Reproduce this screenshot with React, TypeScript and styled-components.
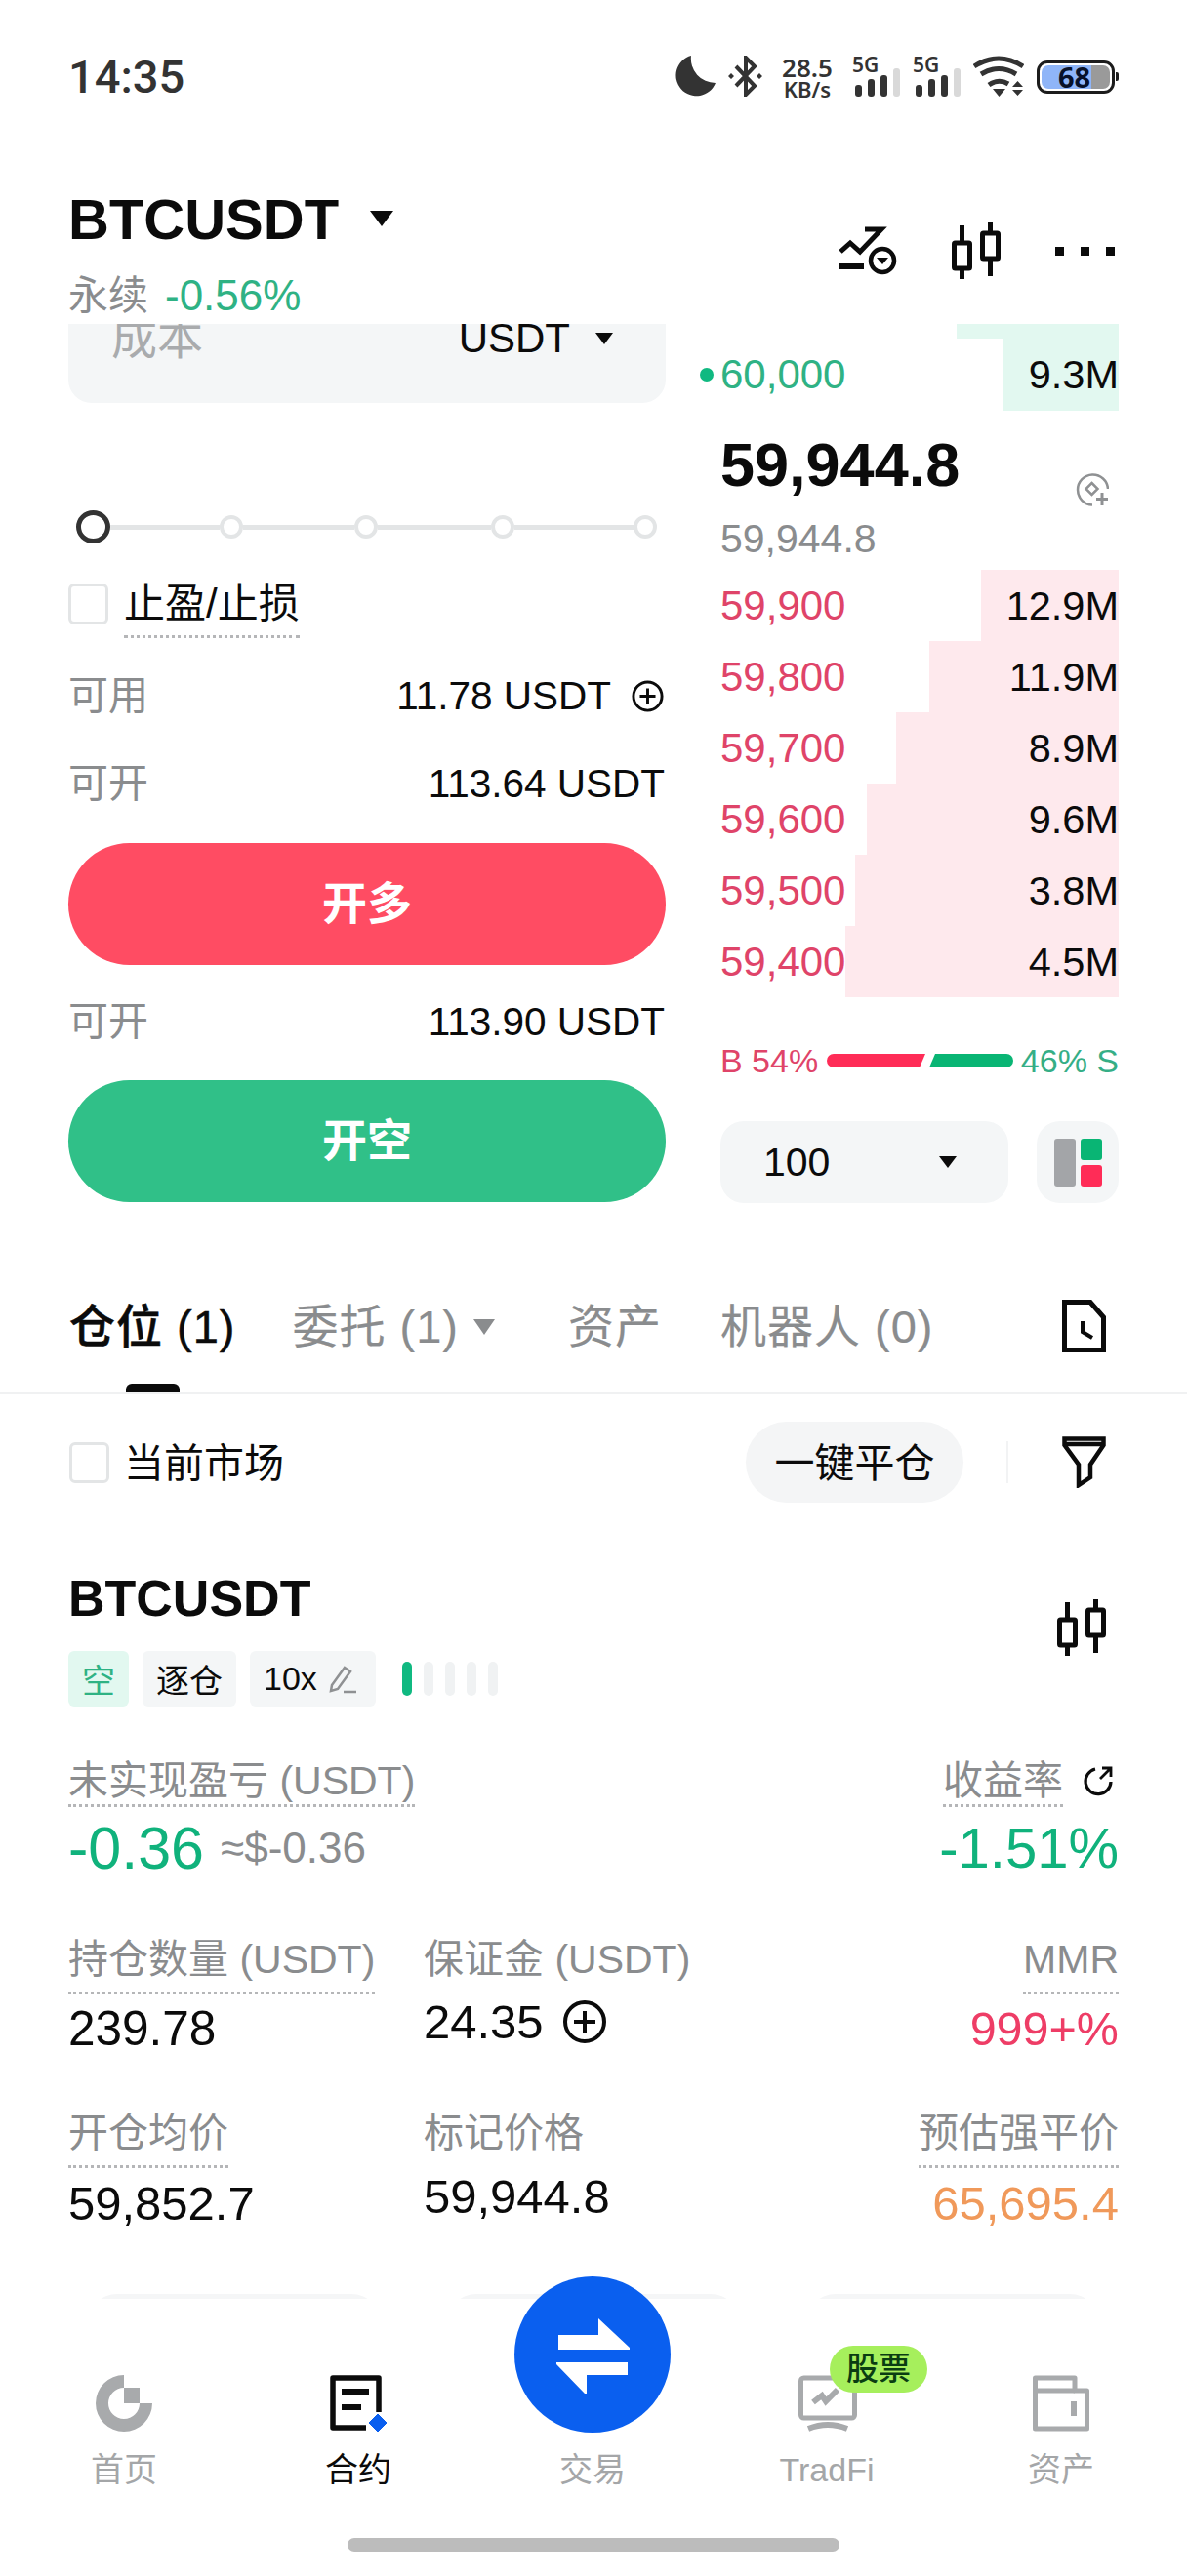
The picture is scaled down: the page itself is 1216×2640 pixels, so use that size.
import React from "react";
import styled, { createGlobalStyle } from "styled-components";

const FONT = `"Liberation Sans", "Noto Sans CJK SC", sans-serif`;
const GREEN = "#2fb284";
const RED = "#df4469";
const GRAY = "#8a8c8e";

const Global = createGlobalStyle`
  html, body { margin: 0; padding: 0; background: #fff; }
  body { font-family: ${FONT}; color: #0b0b0b; }
  * { box-sizing: border-box; }
`;

const Page = styled.div`
  width: 1216px;
  height: 2640px;
  display: flex;
  flex-direction: column;
  overflow: hidden;
  background: #fff;
`;

/* ---------- status bar ---------- */
const StatusBar = styled.div`
  height: 158px;
  flex: none;
  display: flex;
  align-items: flex-start;
  justify-content: space-between;
  padding: 57px 70px 0;
`;
const Time = styled.div`
  font-family: Roboto, sans-serif;
  font-size: 47px;
  font-weight: 500;
  line-height: 44px;
  color: #333;
`;
const StatusIcons = styled.div`
  display: flex;
  align-items: flex-start;
  height: 43px;
  gap: 13px;
`;
const Speed = styled.div`
  width: 52px;
  margin: 0 7px;
  font-family: "Noto Sans", sans-serif;
  font-weight: 600;
  color: #333;
  display: flex;
  flex-direction: column;
  align-items: center;
  white-space: nowrap;
`;
const SpeedTop = styled.span`
  font-size: 26px;
  line-height: 24px;
`;
const SpeedBottom = styled.span`
  font-size: 22px;
  line-height: 20px;
`;
const Signal = styled.div`
  position: relative;
  width: 49px;
  height: 42px;
  display: flex;
  align-items: flex-end;
  justify-content: flex-end;
  gap: 6px;
`;
const SignalTag = styled.span`
  position: absolute;
  left: 0;
  top: -1px;
  font-family: "Noto Sans", sans-serif;
  font-size: 21px;
  line-height: 20px;
  font-weight: 600;
  color: #333;
`;
const SignalBar = styled.i<{ $h: number; $off?: boolean }>`
  display: block;
  width: 7px;
  height: ${(p) => p.$h}px;
  border-radius: 3px;
  background: ${(p) => (p.$off ? "#d9d9d9" : "#333")};
`;
const Battery = styled.div`
  position: relative;
  width: 80px;
  height: 34px;
  margin-top: 5px;
  border: 3px solid #1c1c1c;
  border-radius: 11px;
  padding: 2px;
  margin-right: 4px;
  &::after {
    content: "";
    position: absolute;
    right: -7px;
    top: 9px;
    width: 3px;
    height: 9px;
    background: #1c1c1c;
    border-radius: 0 2px 2px 0;
  }
`;
const BatteryFill = styled.div`
  height: 100%;
  border-radius: 7px;
  background: linear-gradient(to right, #8fb5f8 0 73%, #9a9a9a 73% 100%);
  font-family: "Noto Sans", sans-serif;
  font-weight: 700;
  font-size: 29px;
  line-height: 24px;
  color: #08122a;
  padding-left: 17px;
`;

/* ---------- header ---------- */
const Header = styled.div`
  height: 174px;
  flex: none;
  display: flex;
  justify-content: space-between;
  padding: 31px 74px 0 70px;
`;
const HeaderLeft = styled.div`
  display: flex;
  flex-direction: column;
`;
const Symbol = styled.div`
  display: flex;
  align-items: center;
  height: 70px;
  gap: 32px;
  font-size: 58px;
  font-weight: 700;
  letter-spacing: 0;
`;
const Caret = styled.i<{ $w: number; $h: number; $c?: string }>`
  display: block;
  flex: none;
  width: 0;
  height: 0;
  border-left: ${(p) => p.$w / 2}px solid transparent;
  border-right: ${(p) => p.$w / 2}px solid transparent;
  border-top: ${(p) => p.$h}px solid ${(p) => p.$c ?? "#0b0b0b"};
`;
const SubLine = styled.div`
  margin-top: 21px;
  display: flex;
  align-items: center;
  gap: 17px;
  font-size: 41px;
  line-height: 46px;
  color: ${GRAY};
`;
const Change = styled.span`
  font-size: 44px;
  color: ${GREEN};
`;
const HeaderTools = styled.div`
  margin-top: 39px;
  height: 58px;
  display: flex;
  align-items: center;
`;
const ToolGap = styled.div<{ $w: number }>`
  width: ${(p) => p.$w}px;
`;
const Dots = styled.div`
  display: flex;
  gap: 17px;
`;
const Dot = styled.i`
  display: block;
  width: 9px;
  height: 9px;
  background: #0b0b0b;
`;

/* ---------- scrolling content ---------- */
const Scroll = styled.div`
  flex: 1;
  min-height: 0;
  overflow: hidden;
`;
const Trade = styled.div`
  display: grid;
  grid-template-columns: 612px 408px;
  column-gap: 56px;
  padding: 0 70px;
`;
const OrderForm = styled.div`
  display: flex;
  flex-direction: column;
`;
const InputBox = styled.div`
  margin-top: -60px;
  height: 141px;
  background: #f4f6f7;
  border-radius: 24px;
  padding: 52px 54px 0 44px;
  display: flex;
  justify-content: space-between;
  align-items: flex-start;
`;
const InputLabel = styled.span`
  font-size: 47px;
  line-height: 46px;
  color: #a9abad;
`;
const InputUnit = styled.span`
  display: flex;
  align-items: center;
  gap: 26px;
  font-size: 42px;
  line-height: 46px;
`;
const Slider = styled.div`
  margin-top: 110px;
  height: 34px;
  padding-left: 8px;
  display: flex;
  align-items: center;
`;
const Thumb = styled.i`
  display: block;
  flex: none;
  width: 35px;
  height: 34px;
  border: 5px solid #333;
  border-radius: 50%;
  background: #fff;
`;
const Track = styled.i<{ $w: number }>`
  display: block;
  flex: none;
  width: ${(p) => p.$w}px;
  height: 5px;
  background: #e3e5e6;
`;
const Stop = styled.i`
  display: block;
  flex: none;
  width: 24px;
  height: 24px;
  border: 4px solid #e3e5e6;
  border-radius: 50%;
  background: #fff;
`;
const Check = styled.i`
  display: block;
  flex: none;
  width: 41px;
  height: 42px;
  border: 3px solid #e3e5e6;
  border-radius: 6px;
  background: #fff;
`;
const TpRow = styled.div`
  margin-top: 41px;
  display: flex;
  gap: 16px;
`;
const TpLabel = styled.span`
  font-size: 42px;
  line-height: 42px;
  padding-bottom: 11px;
  border-bottom: 3px dotted #b5b6b8;
`;
const InfoRow = styled.div<{ $mt: number }>`
  margin-top: ${(p) => p.$mt}px;
  height: 40px;
  display: flex;
  align-items: center;
  justify-content: space-between;
  font-size: 41px;
  line-height: 40px;
`;
const InfoLabel = styled.span`
  color: ${GRAY};
`;
const InfoValue = styled.span`
  display: flex;
  align-items: center;
  gap: 20px;
  font-size: 40.5px;
  margin-right: 1px;
`;
const ActionButton = styled.div<{ $bg: string; $mt: number }>`
  margin-top: ${(p) => p.$mt}px;
  height: 125px;
  padding-bottom: 9px;
  border-radius: 63px;
  background: ${(p) => p.$bg};
  display: flex;
  align-items: center;
  justify-content: center;
  color: #fff;
  font-size: 46px;
  font-weight: 700;
`;

/* order book */
const Book = styled.div`
  display: flex;
  flex-direction: column;
`;
const BookRow = styled.div<{ $depth: number; $tint: string; $h?: number }>`
  height: ${(p) => p.$h ?? 73}px;
  display: flex;
  align-items: center;
  justify-content: space-between;
  font-size: 41.5px;
  background: linear-gradient(
    to left,
    ${(p) => p.$tint} ${(p) => p.$depth}px,
    transparent ${(p) => p.$depth}px
  );
`;
const Price = styled.span<{ $c: string }>`
  color: ${(p) => p.$c};
  font-size: 42px;
  display: flex;
  align-items: center;
`;
const PriceDot = styled.i`
  display: block;
  width: 14px;
  height: 14px;
  margin: 0 7px 0 -21px;
  border-radius: 50%;
  background: #10b981;
`;
const Mid = styled.div`
  height: 163px;
  display: flex;
  flex-direction: column;
`;
const MidTop = styled.div`
  height: 108px;
  display: flex;
  justify-content: space-between;
  align-items: flex-start;
  padding: 24px 10px 0 0;
`;
const LastPrice = styled.span`
  font-size: 63px;
  line-height: 62px;
  font-weight: 700;
`;
const MarkIcon = styled.div`
  margin-top: 40px;
  line-height: 0;
`;
const MarkPrice = styled.span`
  font-size: 41px;
  line-height: 46px;
  color: ${GRAY};
`;
const Ratio = styled.div`
  margin-top: 50px;
  height: 30px;
  display: flex;
  align-items: center;
  font-size: 34px;
`;
const RatioBuy = styled.span`
  color: ${RED};
  width: 109px;
  white-space: nowrap;
`;
const RatioSell = styled.span`
  color: #35ae86;
  margin-left: auto;
  white-space: nowrap;
`;
const BarBuy = styled.i`
  display: block;
  width: 101px;
  height: 14px;
  background: #ff2c57;
  border-radius: 7px 0 0 7px;
  clip-path: polygon(0 0, 100% 0, calc(100% - 6px) 100%, 0 100%);
`;
const BarSell = styled.i`
  display: block;
  width: 86px;
  height: 14px;
  margin-left: 4px;
  background: #09b574;
  border-radius: 0 7px 7px 0;
  clip-path: polygon(6px 0, 100% 0, 100% 100%, 0 100%);
`;
const Controls = styled.div`
  margin-top: 47px;
  display: flex;
  justify-content: space-between;
`;
const DepthSelect = styled.div`
  width: 295px;
  height: 84px;
  background: #f4f6f7;
  border-radius: 24px;
  padding: 0 53px 0 44px;
  display: flex;
  align-items: center;
  justify-content: space-between;
  font-size: 41px;
`;
const LayoutButton = styled.div`
  width: 84px;
  height: 84px;
  background: #f4f6f7;
  border-radius: 24px;
  display: flex;
  align-items: center;
  justify-content: center;
`;

/* tabs */
const TabBar = styled.div`
  height: 196px;
  padding: 104px 83px 0 71px;
  display: flex;
  align-items: flex-start;
  border-bottom: 2px solid #f0f1f2;
`;
const Tab = styled.div<{ $active?: boolean; $ml?: number }>`
  height: 90px;
  margin-left: ${(p) => p.$ml ?? 0}px;
  display: flex;
  flex-direction: column;
  align-items: center;
  justify-content: space-between;
  color: ${(p) => (p.$active ? "#0b0b0b" : GRAY)};
  font-size: 47px;
  line-height: 46px;
  letter-spacing: 1px;
  font-weight: ${(p) => (p.$active ? 500 : 400)};
  -webkit-text-stroke: ${(p) => (p.$active ? 0.5 : 0.2)}px currentColor;
  white-space: nowrap;
`;
const TabText = styled.span`
  display: flex;
  align-items: center;
  gap: 15px;
`;
const TabMark = styled.i`
  display: block;
  width: 55px;
  height: 9px;
  background: #0b0b0b;
  border-radius: 6px 6px 0 0;
`;
const TabIcon = styled.div`
  margin: -5px 0 0 auto;
  line-height: 0;
`;

const FilterRow = styled.div`
  height: 111px;
  padding: 28px 83px 0 71px;
  display: flex;
  align-items: center;
`;
const MarketLabel = styled.span`
  margin-left: 15px;
  padding-bottom: 5px;
  font-size: 41px;
`;
const CloseAll = styled.div`
  margin-left: auto;
  width: 223px;
  height: 83px;
  padding-bottom: 5px;
  border-radius: 42px;
  background: #f4f5f6;
  display: flex;
  align-items: center;
  justify-content: center;
  font-size: 41px;
`;
const Divider = styled.i`
  display: block;
  width: 2px;
  height: 43px;
  margin: 0 55px 0 44px;
  background: #f2f3f4;
`;

/* position */
const PositionHead = styled.div`
  margin-top: 68px;
  padding: 0 80px 0 70px;
  display: flex;
  justify-content: space-between;
  align-items: center;
`;
const PositionTitle = styled.div`
  font-size: 52px;
  line-height: 60px;
  font-weight: 700;
`;
const Tags = styled.div`
  margin-top: 24px;
  display: flex;
  align-items: center;
  gap: 14px;
`;
const Tag = styled.span<{ $green?: boolean }>`
  height: 57px;
  padding: 0 14px;
  border-radius: 6px;
  display: flex;
  align-items: center;
  gap: 12px;
  font-size: 34px;
  background: ${(p) => (p.$green ? "#e2f8f0" : "#f4f6f7")};
  color: ${(p) => (p.$green ? GREEN : "#0b0b0b")};
`;
const Level = styled.div`
  margin-left: 13px;
  display: flex;
  gap: 12px;
`;
const LevelBar = styled.i<{ $on?: boolean }>`
  display: block;
  width: 10px;
  height: 35px;
  border-radius: 5px;
  background: ${(p) => (p.$on ? "#10b981" : "#f0f2f3")};
`;
const HeadIcon = styled.div`
  margin-bottom: 22px;
  line-height: 0;
`;
const MetricRow = styled.div<{ $mt: number }>`
  margin-top: ${(p) => p.$mt}px;
  padding: 0 70px;
  display: grid;
  grid-template-columns: 364px 1fr auto;
`;
const Cell = styled.div<{ $end?: boolean }>`
  display: flex;
  flex-direction: column;
  align-items: ${(p) => (p.$end ? "flex-end" : "flex-start")};
`;
const LabelLine = styled.div`
  display: flex;
  align-items: flex-start;
  gap: 20px;
  padding-right: 5px;
`;
const RefreshSlot = styled.span`
  display: flex;
  margin-top: 7px;
`;
const Label = styled.span<{ $pad: number; $plain?: boolean }>`
  font-size: 41px;
  line-height: 46px;
  color: ${GRAY};
  white-space: nowrap;
  padding-bottom: ${(p) => p.$pad}px;
  border-bottom: 3px dotted ${(p) => (p.$plain ? "transparent" : "#b5b6b8")};
`;
const Value = styled.div<{ $size: number; $c?: string; $mt: number; $lh: number }>`
  margin-top: ${(p) => p.$mt}px;
  font-size: ${(p) => p.$size}px;
  line-height: ${(p) => p.$lh}px;
  color: ${(p) => p.$c ?? "#0b0b0b"};
  display: flex;
  align-items: center;
  white-space: nowrap;
`;
const Approx = styled.span`
  margin-left: 17px;
  font-size: 44px;
  color: ${GRAY};
`;
const ValueIcon = styled.span`
  display: flex;
  margin-left: 18px;
`;
const GhostRow = styled.div`
  margin-top: 65px;
  padding: 0 90px;
  display: grid;
  grid-template-columns: repeat(3, 300px);
  column-gap: 68px;
`;
const Ghost = styled.i`
  display: block;
  height: 60px;
  border-radius: 30px;
  background: #f5f6f7;
`;

/* tab bar */
const Nav = styled.div`
  position: relative;
  flex: none;
  height: 284px;
  background: #fff;
  padding-top: 78px;
  display: flex;
  flex-direction: column;
`;
const NavGrid = styled.div`
  padding: 0 7px;
  display: grid;
  grid-template-columns: repeat(5, 240px);
`;
const NavItem = styled.div<{ $active?: boolean }>`
  position: relative;
  display: flex;
  flex-direction: column;
  align-items: center;
  gap: 19px;
  font-size: 34px;
  line-height: 40px;
  color: ${(p) => (p.$active ? "#0b0b0b" : "#a4a6a8")};
`;
const NavIcon = styled.div`
  width: 58px;
  height: 58px;
  line-height: 0;
`;
const TradeCircle = styled.div`
  position: absolute;
  top: -101px;
  left: 40px;
  width: 160px;
  height: 160px;
  border-radius: 50%;
  background: #0a5fef;
  line-height: 0;
`;
const StockBadge = styled.span`
  position: absolute;
  top: -30px;
  left: 123px;
  width: 100px;
  height: 48px;
  border-radius: 24px;
  background: #a6ef5c;
  color: #0a3d12;
  display: flex;
  align-items: center;
  justify-content: center;
  font-size: 33px;
  font-weight: 500;
`;
const HomeBar = styled.i`
  display: block;
  width: 504px;
  height: 14px;
  margin: 50px auto 0;
  border-radius: 7px;
  background: #bcbcbc;
`;

/* ---------- drawings ---------- */
const Candle = () => (
  <svg width="54" height="58" viewBox="0 0 54 58" fill="none" stroke="#0b0b0b" strokeWidth="5">
    <rect x="3.5" y="21" width="16" height="26" rx="1" />
    <path d="M11.5 3v18M11.5 47v11" />
    <rect x="32.5" y="11" width="16" height="26" rx="1" />
    <path d="M40.5 0v11M40.5 37v18" />
  </svg>
);
const PlusCircle = ({ size, sw }: { size: number; sw: number }) => (
  <svg width={size} height={size} viewBox="0 0 48 48" fill="none" stroke="#0b0b0b" strokeWidth={sw}>
    <circle cx="24" cy="24" r={24 - sw} />
    <path d="M24 13v22M13 24h22" />
  </svg>
);
const Moon = () => (
  <svg width="42" height="42" viewBox="0 0 42 42">
    <path d="M17 0A21 21 0 1 0 42 28 A25 25 0 0 1 17 0Z" fill="#333" />
  </svg>
);
const Bluetooth = () => (
  <svg width="35" height="42" viewBox="0 0 35 42" fill="none" stroke="#333" strokeWidth="4">
    <path d="M8 11L27 31L18 40V2L27 11L8 31" />
    <path d="M0 21l3-3 3 3-3 3zM29 21l3-3 3 3-3 3z" fill="#333" stroke="none" />
  </svg>
);
const Wifi = () => (
  <svg width="52" height="42" viewBox="0 0 52 42" fill="none" stroke="#333" strokeWidth="5">
    <path d="M1 11Q26 -5 51 11" />
    <path d="M8 19Q26 8 44 19" />
    <path d="M16 30Q26 23 36 29" />
    <path d="M20 34h13l-6.500 8z" fill="#333" stroke="none" />
    <path d="M40 32l5.500-6 5.500 6zM40 35h11l-5.500 6z" fill="#333" stroke="none" />
  </svg>
);
const TrendIcon = () => (
  <svg width="62" height="50" viewBox="0 0 62 50" fill="none" stroke="#0b0b0b" strokeWidth="5">
    <path d="M3 26L13 17L23 26L45 3H28" />
    <path d="M1 41H27" strokeWidth="6" />
    <circle cx="46" cy="35" r="12" strokeWidth="4.500" />
    <path d="M40 32h12l-6 7z" fill="#0b0b0b" stroke="none" />
  </svg>
);
const MarkGlyph = () => (
  <svg width="34" height="34" viewBox="0 0 34 34" fill="none" stroke="#8f9193" strokeWidth="2.500">
    <path d="M33 16A15.500 15.500 0 1 0 17 32.500" />
    <path d="M16.500 10l6 6-6 6-6-6z" />
    <path d="M27 20v13M21 26.500h12" strokeWidth="3" />
  </svg>
);
const LayoutGlyph = () => (
  <svg width="49" height="49" viewBox="0 0 49 49">
    <rect x="0" y="0" width="22" height="49" rx="3" fill="#a3a5a8" />
    <rect x="27" y="0" width="22" height="22" rx="3" fill="#09b574" />
    <rect x="27" y="27" width="22" height="22" rx="3" fill="#ff2c57" />
  </svg>
);
const DocClock = () => (
  <svg width="45" height="54" viewBox="0 0 45 54" fill="none" stroke="#0b0b0b" strokeWidth="5">
    <path d="M2.500 2.500H29L42.500 18V51.500H2.500Z" />
    <path d="M21 22V33L31 39" strokeWidth="4" />
  </svg>
);
const Funnel = () => (
  <svg width="45" height="53" viewBox="0 0 45 53" fill="none" stroke="#0b0b0b" strokeWidth="4.500">
    <path d="M2.500 2.500H42.500V9L29 29V42L17 50V29L2.500 9Z" strokeLinejoin="miter" />
    <path d="M2.500 8H42.500" />
  </svg>
);
const Pencil = () => (
  <svg width="34" height="30" viewBox="0 0 34 30" fill="none" stroke="#8f9193" strokeWidth="2.500">
    <path d="M3 21L16 3L22 7L9 25L2 27Z" />
    <path d="M15 28H28" />
  </svg>
);
const Refresh = () => (
  <svg width="32" height="32" viewBox="0 0 32 32" fill="none" stroke="#0b0b0b" strokeWidth="3.200">
    <path d="M13 4A13 13 0 1 0 29 17" />
    <path d="M20 3H29V12M29 3L18 14" strokeWidth="2.800" />
  </svg>
);
const HomeGlyph = () => (
  <svg width="58" height="58" viewBox="0 0 58 58" fill="#a8aaac">
    <path d="M29 0A29 29 0 1 0 58 29H45A16 16 0 1 1 29 13Z" />
    <rect x="29" y="13" width="16" height="16" />
  </svg>
);
const ContractGlyph = () => (
  <svg width="58" height="58" viewBox="0 0 58 58" fill="none">
    <path d="M50 38V3H3V54H37" stroke="#0b0b0b" strokeWidth="5.500" strokeLinejoin="round" />
    <rect x="12" y="14" width="28" height="6" fill="#0b0b0b" />
    <rect x="12" y="30" width="20" height="6" fill="#0b0b0b" />
    <path d="M49 40L58 49L49 58L40 49Z" fill="#0a5fef" stroke="#0a5fef" strokeWidth="1" strokeLinejoin="round" />
  </svg>
);
const TradeGlyph = () => (
  <svg width="160" height="160" viewBox="0 0 160 160" fill="#fff">
    <path d="M45 60H86V43L118 73V75H45Z" />
    <path d="M43 88H116V101H74V120H72L43 90Z" />
  </svg>
);
const TradFiGlyph = () => (
  <svg width="62" height="58" viewBox="0 0 62 58" fill="none" stroke="#a8aaac" strokeWidth="5">
    <rect x="2.500" y="3" width="55" height="41" rx="3" />
    <path d="M10 55Q30 47 50 55" strokeWidth="6" />
    <path d="M15 28L24 21L28 27L40 15" strokeWidth="6" />
  </svg>
);
const WalletGlyph = () => (
  <svg width="58" height="58" viewBox="0 0 58 58" fill="none" stroke="#a8aaac" strokeWidth="5">
    <path d="M2.500 3H43V16H55.500V55H2.500Z" strokeLinejoin="round" />
    <path d="M2.500 16H43" />
    <rect x="39" y="27" width="6" height="15" fill="#a8aaac" stroke="none" />
  </svg>
);

const asks = [
  { p: "59,900", v: "12.9M", d: 141 },
  { p: "59,800", v: "11.9M", d: 194 },
  { p: "59,700", v: "8.9M", d: 228 },
  { p: "59,600", v: "9.6M", d: 258 },
  { p: "59,500", v: "3.8M", d: 270 },
  { p: "59,400", v: "4.5M", d: 280 },
];
const RED_TINT = "#fee9ed";
const GREEN_TINT = "#e2f8f0";

export default function App() {
  return (
    <Page>
      <Global />
      <StatusBar>
        <Time>14:35</Time>
        <StatusIcons>
          <Moon />
          <Bluetooth />
          <Speed>
            <SpeedTop>28.5</SpeedTop>
            <SpeedBottom>KB/s</SpeedBottom>
          </Speed>
          {[0, 1].map((k) => (
            <Signal key={k}>
              <SignalTag>5G</SignalTag>
              <SignalBar $h={12} />
              <SignalBar $h={18} />
              <SignalBar $h={22} />
              <SignalBar $h={29} $off />
            </Signal>
          ))}
          <Wifi />
          <Battery>
            <BatteryFill>68</BatteryFill>
          </Battery>
        </StatusIcons>
      </StatusBar>

      <Header>
        <HeaderLeft>
          <Symbol>
            BTCUSDT
            <Caret $w={25} $h={16} />
          </Symbol>
          <SubLine>
            永续
            <Change>-0.56%</Change>
          </SubLine>
        </HeaderLeft>
        <HeaderTools>
          <TrendIcon />
          <ToolGap $w={54} />
          <Candle />
          <ToolGap $w={53} />
          <Dots>
            <Dot />
            <Dot />
            <Dot />
          </Dots>
        </HeaderTools>
      </Header>

      <Scroll>
        <Trade>
          <OrderForm>
            <InputBox>
              <InputLabel>成本</InputLabel>
              <InputUnit>
                USDT
                <Caret $w={19} $h={12} />
              </InputUnit>
            </InputBox>
            <Slider>
              <Thumb />
              <Track $w={112} />
              <Stop />
              <Track $w={114} />
              <Stop />
              <Track $w={116} />
              <Stop />
              <Track $w={122} />
              <Stop />
            </Slider>
            <TpRow>
              <Check />
              <TpLabel>止盈/止损</TpLabel>
            </TpRow>
            <InfoRow $mt={39}>
              <InfoLabel>可用</InfoLabel>
              <InfoValue>
                11.78 USDT
                <PlusCircle size={35} sw={4} />
              </InfoValue>
            </InfoRow>
            <InfoRow $mt={50}>
              <InfoLabel>可开</InfoLabel>
              <InfoValue>113.64 USDT</InfoValue>
            </InfoRow>
            <ActionButton $bg="#ff4c63" $mt={41}>
              开多
            </ActionButton>
            <InfoRow $mt={38}>
              <InfoLabel>可开</InfoLabel>
              <InfoValue>113.90 USDT</InfoValue>
            </InfoRow>
            <ActionButton $bg="#30c088" $mt={40}>
              开空
            </ActionButton>
          </OrderForm>

          <Book>
            <BookRow $depth={166} $tint={GREEN_TINT} $h={15} />
            <BookRow $depth={119} $tint={GREEN_TINT} $h={74}>
              <Price $c={GREEN}>
                <PriceDot />
                60,000
              </Price>
              9.3M
            </BookRow>
            <Mid>
              <MidTop>
                <LastPrice>59,944.8</LastPrice>
                <MarkIcon>
                  <MarkGlyph />
                </MarkIcon>
              </MidTop>
              <MarkPrice>59,944.8</MarkPrice>
            </Mid>
            {asks.map((a) => (
              <BookRow key={a.p} $depth={a.d} $tint={RED_TINT}>
                <Price $c={RED}>{a.p}</Price>
                {a.v}
              </BookRow>
            ))}
            <Ratio>
              <RatioBuy>B 54%</RatioBuy>
              <BarBuy />
              <BarSell />
              <RatioSell>46% S</RatioSell>
            </Ratio>
            <Controls>
              <DepthSelect>
                100
                <Caret $w={18} $h={12} />
              </DepthSelect>
              <LayoutButton>
                <LayoutGlyph />
              </LayoutButton>
            </Controls>
          </Book>
        </Trade>

        <TabBar>
          <Tab $active>
            <TabText>
              <span>仓位 (1)</span>
            </TabText>
            <TabMark />
          </Tab>
          <Tab $ml={58}>
            <TabText>
              <span>委托 (1)</span>
              <Caret $w={23} $h={16} $c={GRAY} />
            </TabText>
          </Tab>
          <Tab $ml={75}>资产</Tab>
          <Tab $ml={60}>机器人 (0)</Tab>
          <TabIcon>
            <DocClock />
          </TabIcon>
        </TabBar>

        <FilterRow>
          <Check />
          <MarketLabel>当前市场</MarketLabel>
          <CloseAll>一键平仓</CloseAll>
          <Divider />
          <Funnel />
        </FilterRow>

        <PositionHead>
          <div>
            <PositionTitle>BTCUSDT</PositionTitle>
            <Tags>
              <Tag $green>空</Tag>
              <Tag>逐仓</Tag>
              <Tag>
                10x
                <Pencil />
              </Tag>
              <Level>
                <LevelBar $on />
                <LevelBar />
                <LevelBar />
                <LevelBar />
                <LevelBar />
              </Level>
            </Tags>
          </div>
          <HeadIcon>
            <Candle />
          </HeadIcon>
        </PositionHead>

        <MetricRow $mt={53}>
          <Cell>
            <Label $pad={1}>未实现盈亏 (USDT)</Label>
            <Value $size={61} $lh={60} $mt={12} $c="#10b27c">
              -0.36
              <Approx>≈$-0.36</Approx>
            </Value>
          </Cell>
          <div />
          <Cell $end>
            <LabelLine>
              <Label $pad={1}>收益率</Label>
              <RefreshSlot>
                <Refresh />
              </RefreshSlot>
            </LabelLine>
            <Value $size={58} $lh={60} $mt={12} $c="#10b27c">
              -1.51%
            </Value>
          </Cell>
        </MetricRow>

        <MetricRow $mt={61}>
          <Cell>
            <Label $pad={10}>持仓数量 (USDT)</Label>
            <Value $size={49.5} $lh={56} $mt={7}>
              239.78
            </Value>
          </Cell>
          <Cell>
            <Label $pad={10} $plain>
              保证金 (USDT)
            </Label>
            <Value $size={49} $lh={56} $mt={0}>
              24.35
              <ValueIcon>
                <PlusCircle size={48} sw={4} />
              </ValueIcon>
            </Value>
          </Cell>
          <Cell $end>
            <Label $pad={10}>MMR</Label>
            <Value $size={48.5} $lh={56} $mt={7} $c="#ee3d66">
              999+%
            </Value>
          </Cell>
        </MetricRow>

        <MetricRow $mt={56}>
          <Cell>
            <Label $pad={10}>开仓均价</Label>
            <Value $size={49} $lh={56} $mt={8}>
              59,852.7
            </Value>
          </Cell>
          <Cell>
            <Label $pad={10} $plain>
              标记价格
            </Label>
            <Value $size={49} $lh={56} $mt={1}>
              59,944.8
            </Value>
          </Cell>
          <Cell $end>
            <Label $pad={10}>预估强平价</Label>
            <Value $size={49} $lh={56} $mt={8} $c="#f0995a">
              65,695.4
            </Value>
          </Cell>
        </MetricRow>

        <GhostRow>
          <Ghost />
          <Ghost />
          <Ghost />
        </GhostRow>
      </Scroll>

      <Nav>
        <NavGrid>
          <NavItem>
            <NavIcon>
              <HomeGlyph />
            </NavIcon>
            首页
          </NavItem>
          <NavItem $active>
            <NavIcon>
              <ContractGlyph />
            </NavIcon>
            合约
          </NavItem>
          <NavItem>
            <TradeCircle>
              <TradeGlyph />
            </TradeCircle>
            <NavIcon />
            交易
          </NavItem>
          <NavItem>
            <NavIcon>
              <TradFiGlyph />
            </NavIcon>
            <StockBadge>股票</StockBadge>
            TradFi
          </NavItem>
          <NavItem>
            <NavIcon>
              <WalletGlyph />
            </NavIcon>
            资产
          </NavItem>
        </NavGrid>
        <HomeBar />
      </Nav>
    </Page>
  );
}
